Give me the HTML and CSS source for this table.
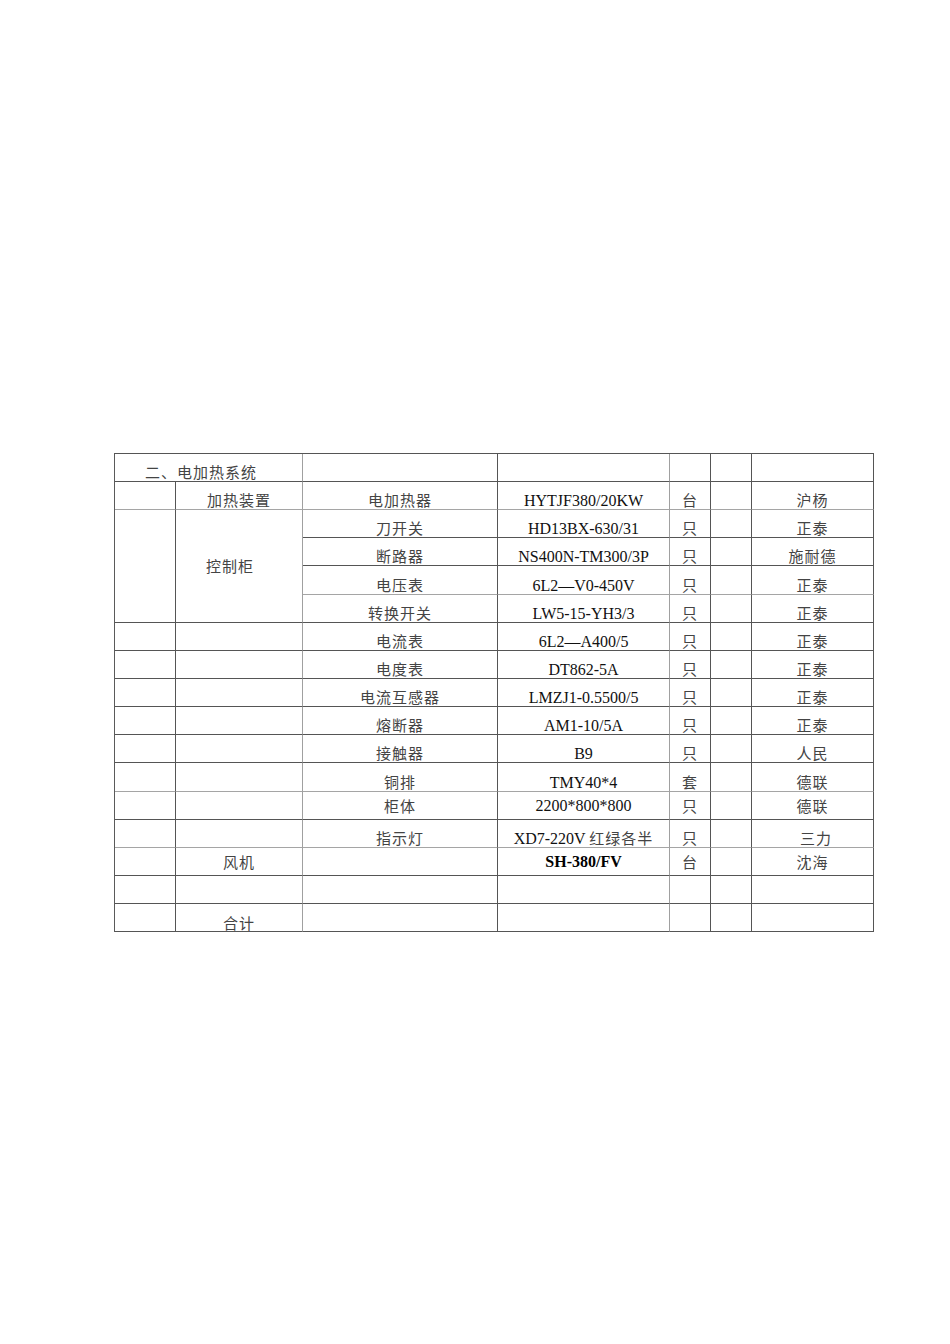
FILE: index.html
```html
<!DOCTYPE html>
<html lang="zh">
<head>
<meta charset="utf-8">
<title>电加热系统</title>
<link rel="stylesheet" href="styles.css">
</head>
<body>
<table class="sheet">
  <colgroup>
    <col class="w1"><col class="w2"><col class="w3"><col class="w4"><col class="w5"><col class="w6"><col class="w7">
  </colgroup>
  <tr>
    <td colspan="2" class="z title c2">二、电加热系统</td><td></td><td class="c4"></td><td></td><td></td><td></td>
  </tr>
  <tr class="lb">
    <td></td><td class="z c2">加热装置</td><td class="z">电加热器</td><td class="c4">HYTJF380/20KW</td><td class="z">台</td><td></td><td class="z">沪杨</td>
  </tr>
  <tr>
    <td rowspan="4"></td><td rowspan="4" class="z mid kzg c2">控制柜</td><td class="z">刀开关</td><td class="c4">HD13BX-630/31</td><td class="z">只</td><td></td><td class="z">正泰</td>
  </tr>
  <tr>
    <td class="z">断路器</td><td class="c4">NS400N-TM300/3P</td><td class="z">只</td><td></td><td class="z">施耐德</td>
  </tr>
  <tr class="tall lb">
    <td class="z">电压表</td><td class="c4">6L2—V0-450V</td><td class="z">只</td><td></td><td class="z">正泰</td>
  </tr>
  <tr>
    <td class="z">转换开关</td><td class="c4">LW5-15-YH3/3</td><td class="z">只</td><td></td><td class="z">正泰</td>
  </tr>
  <tr>
    <td></td><td class="c2"></td><td class="z">电流表</td><td class="c4">6L2—A400/5</td><td class="z">只</td><td></td><td class="z">正泰</td>
  </tr>
  <tr>
    <td></td><td class="c2"></td><td class="z">电度表</td><td class="c4">DT862-5A</td><td class="z">只</td><td></td><td class="z">正泰</td>
  </tr>
  <tr>
    <td></td><td class="c2"></td><td class="z">电流互感器</td><td class="c4">LMZJ1-0.5500/5</td><td class="z">只</td><td></td><td class="z">正泰</td>
  </tr>
  <tr>
    <td></td><td class="c2"></td><td class="z">熔断器</td><td class="c4">AM1-10/5A</td><td class="z">只</td><td></td><td class="z">正泰</td>
  </tr>
  <tr>
    <td></td><td class="c2"></td><td class="z">接触器</td><td class="c4">B9</td><td class="z">只</td><td></td><td class="z">人民</td>
  </tr>
  <tr class="tall lb">
    <td></td><td class="c2"></td><td class="z">铜排</td><td class="c4">TMY40*4</td><td class="z">套</td><td></td><td class="z">德联</td>
  </tr>
  <tr class="midrow">
    <td></td><td class="c2"></td><td class="z">柜体</td><td class="c4">2200*800*800</td><td class="z">只</td><td></td><td class="z">德联</td>
  </tr>
  <tr class="lb">
    <td></td><td class="c2"></td><td class="z">指示灯</td><td class="c4">XD7-220V <span class="zs">红绿各半</span></td><td class="z">只</td><td></td><td class="z shift">三力</td>
  </tr>
  <tr class="midrow">
    <td></td><td class="z c2">风机</td><td></td><td class="b c4">SH-380/FV</td><td class="z">台</td><td></td><td class="z">沈海</td>
  </tr>
  <tr>
    <td></td><td class="c2"></td><td></td><td class="c4"></td><td></td><td></td><td></td>
  </tr>
  <tr>
    <td></td><td class="z c2 low">合计</td><td></td><td class="c4"></td><td></td><td></td><td></td>
  </tr>
</table>
</body>
</html>
```
FILE: styles.css
```css
html, body {
  margin: 0;
  padding: 0;
  background: #ffffff;
}

.sheet {
  margin: 453px 0 0 114px;
  width: 760px;
  table-layout: fixed;
  border-collapse: separate;
  border-spacing: 0;
  border-top: 1px solid #555555;
  border-left: 1px solid #5a5a5a;
  font-family: "Liberation Serif", "Noto Sans CJK SC", serif;
  font-size: 16px;
  color: #111111;
}

.w1 { width: 61px; }
.w2 { width: 127px; }
.w3 { width: 195px; }
.w4 { width: 172px; }
.w5 { width: 41px; }
.w6 { width: 41px; }
.w7 { width: 122px; }

.sheet tr {
  height: 28px;
}

.sheet tr.tall {
  height: 29px;
}

.sheet td {
  padding: 0;
  border-right: 1px solid #555555;
  border-bottom: 1px solid #555555;
  text-align: center;
  vertical-align: bottom;
  line-height: 17px;
  white-space: nowrap;
  overflow: hidden;
}

.sheet tr.lb td {
  border-bottom-color: #a5a5a5;
}

.sheet td.c2,
.sheet td.c4 {
  border-right-color: #a0a0a0;
}

.sheet td.z,
.zs {
  font-family: "Noto Sans CJK SC", sans-serif;
  font-size: 15px;
  letter-spacing: 1px;
  color: #444444;
}

.sheet td.z {
  padding-bottom: 1px;
}

.sheet td.z.low {
  padding-bottom: 0;
}

.sheet td.title {
  text-align: left;
  padding-left: 30px;
}

.sheet td.mid,
.sheet tr.midrow td {
  vertical-align: middle;
}

.sheet td.kzg {
  padding-right: 18px;
}

.sheet td.shift {
  padding-left: 7px;
}

.sheet td.b {
  font-weight: bold;
  color: #000000;
}
```
